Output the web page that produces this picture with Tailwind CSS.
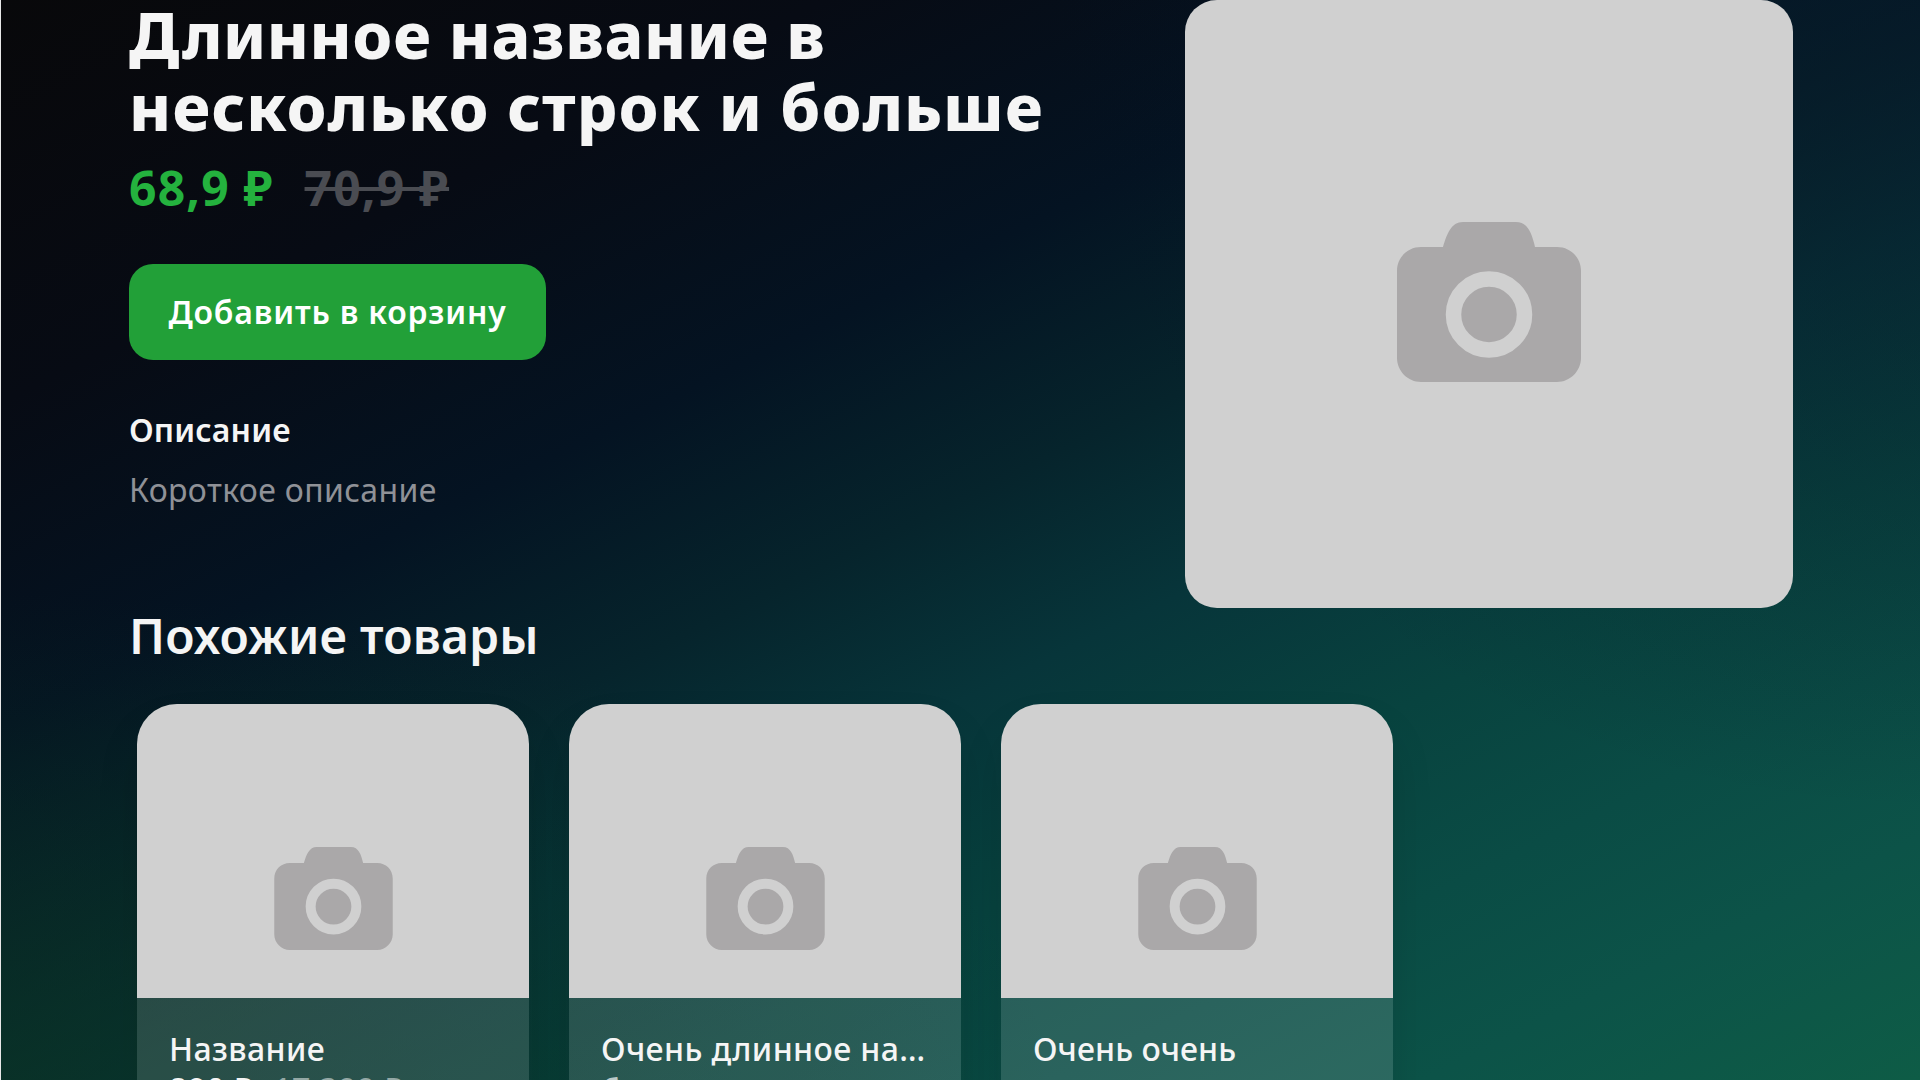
<!DOCTYPE html>
<html lang="ru"><head><meta charset="utf-8"><title>Товар</title>
<script src="https://cdn.jsdelivr.net/npm/@tailwindcss/browser@4"></script></head>
<body class="h-[1080px] overflow-hidden bg-[#08080a] font-['Noto_Sans','Open_Sans',sans-serif] text-[#f5f5f5]">
<svg class="hidden"><symbol id="cam" viewBox="0 0 184 160"><path fill="#aaa8a9" d="M24 25h22C50 12 54 0 66 0h53c12 0 16 12 19 25h22c13 0 24 10 24 24v87c0 13-11 24-24 24H24c-13 0-24-11-24-24V49c0-14 11-24 24-24z"/><circle cx="92" cy="92.500" r="35.500" fill="none" stroke="#d0d0d0" stroke-width="15.500"/></symbol></svg>
<div class="h-[1080px] overflow-hidden border-l border-[#e8e8e8] bg-[radial-gradient(45%_75%_at_100%_0%,#06142699_0%,#06142600_100%),radial-gradient(55%_45%_at_0%_100%,#0a331f99_0%,#0a3d2c00_100%),linear-gradient(154deg,#08080a_0%,#070b14_20%,#041322_36%,#06242c_48%,#07353a_58%,#08433f_69%,#0a4c45_79%,#0c5348_88%,#0e5c46_100%)] pl-32 pr-[127px]">
<section class="flex h-[608px] justify-between">
<div class="flex flex-col items-start">
<h1 class="-mt-px text-[64px] leading-[72px] font-extrabold whitespace-nowrap"><span class="block w-max tracking-[0.6px]">Длинное название в</span><span class="block w-max tracking-[0.98px]">несколько строк и больше</span></h1>
<div class="mt-[17px] flex gap-[31px] text-5xl leading-14 font-bold tracking-[1.2px]"><span class="text-[#24b23e]">68,9 ₽</span><span class="text-[#4a4c52] line-through">70,9 ₽</span></div>
<button class="mt-12 flex h-24 w-[417px] items-center justify-center rounded-3xl bg-[#22a038] pb-px text-[32px] font-semibold tracking-[0.8px] whitespace-nowrap text-white">Добавить в корзину</button>
<h2 class="mt-12 text-[32px] leading-11 font-semibold tracking-[0.15px]">Описание</h2>
<p class="mt-4 text-[32px] leading-11 tracking-[0.35px] text-[#8f9197]">Короткое описание</p>
</div>
<div class="flex size-[608px] justify-center rounded-[32px] bg-[#d0d0d0] pt-[222px]"><svg class="h-40 w-[184px]"><use href="#cam"/></svg></div>
</section>
<h2 class="text-5xl leading-14 font-semibold tracking-[0.2px]">Похожие товары</h2>
<div class="mt-10 ml-2 flex gap-10">
<article class="h-[500px] w-[392px] overflow-hidden rounded-[40px] bg-white/13 shadow-[0_24px_48px_-8px_rgba(0,0,0,0.16)]"><div class="flex h-[294px] justify-center bg-[#d0d0d0] pt-[143px]"><svg class="h-[103px] w-[119px]"><use href="#cam"/></svg></div><div class="px-8 pt-[31px] text-[32px] leading-10 font-medium tracking-[0.4px]"><p>Название</p><p class="flex gap-5 whitespace-nowrap"><span class="font-semibold">890 ₽</span><span class="text-white/50 line-through">17 399 ₽</span></p></div></article>
<article class="h-[500px] w-[392px] overflow-hidden rounded-[40px] bg-white/13 shadow-[0_24px_48px_-8px_rgba(0,0,0,0.16)]"><div class="flex h-[294px] justify-center bg-[#d0d0d0] pt-[143px]"><svg class="h-[103px] w-[119px]"><use href="#cam"/></svg></div><div class="px-8 pt-[31px] text-[32px] leading-10 font-medium tracking-[0.4px]"><p class="whitespace-nowrap">Очень длинное на…</p><p class="mt-0.5 text-white/70">бесплатно</p></div></article>
<article class="h-[500px] w-[392px] overflow-hidden rounded-[40px] bg-white/13 shadow-[0_24px_48px_-8px_rgba(0,0,0,0.16)]"><div class="flex h-[294px] justify-center bg-[#d0d0d0] pt-[143px]"><svg class="h-[103px] w-[119px]"><use href="#cam"/></svg></div><div class="px-8 pt-[31px] text-[32px] leading-10 font-medium tracking-[0.1px]"><p>Очень очень</p></div></article>
</div>
</div></body></html>
